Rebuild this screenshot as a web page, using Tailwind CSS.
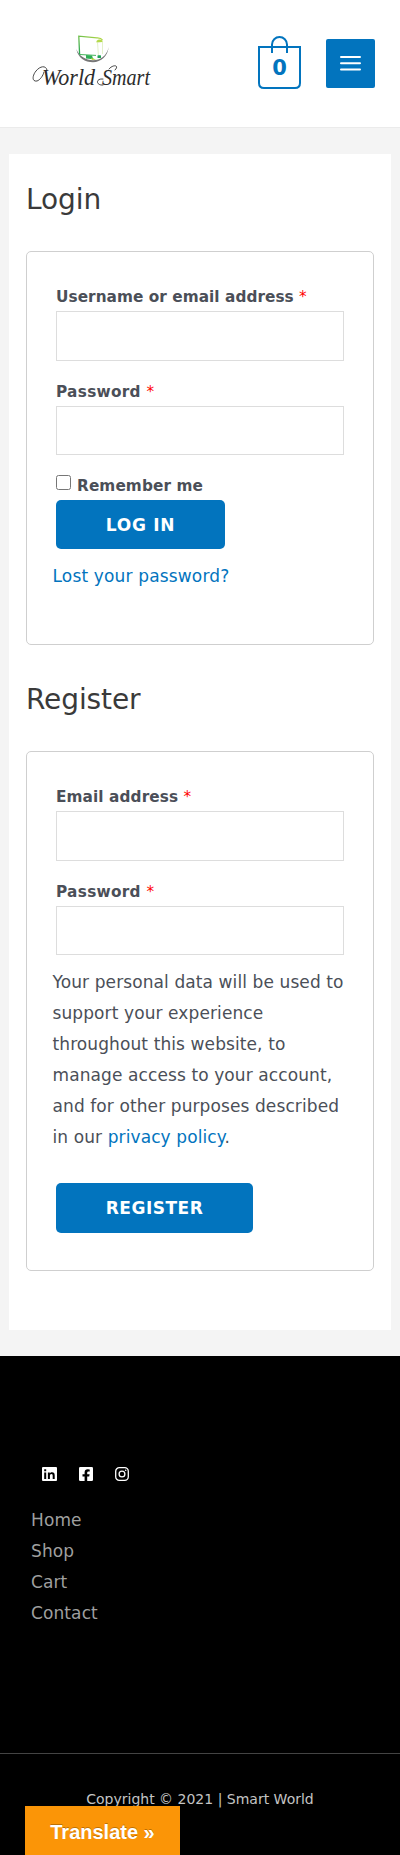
<!DOCTYPE html>
<html lang="en">
<head>
<meta charset="utf-8">
<title>My account</title>
<script src="https://cdn.jsdelivr.net/npm/@tailwindcss/browser@4"></script>
</head>
<body class="bg-[#f4f4f4] font-['Verdana','DejaVu_Sans',sans-serif] text-[#4b4f58]">
<div class="relative h-[1855px] w-[400px] overflow-hidden">
  <header class="flex h-[128px] items-start border-b border-[#ebebeb] bg-white pl-[25px] pr-[25px]">
    <a href="#" class="mt-[28px]" aria-label="World Smart">
      <svg class="overflow-visible" width="135" height="66" viewBox="0 0 135 66">
        <defs>
          <linearGradient id="g" x1="0" y1="1" x2="1" y2="0"><stop offset="0" stop-color="#23a455"/><stop offset="1" stop-color="#bddb45"/></linearGradient>
        </defs>
        <path d="M51.3 21C53 30 60 34.2 68 34.2S83 28 83.600 19C82 28 75 32.300 68 32.300S54 28 51.300 21Z" fill="#777"/>
        <path d="M54.600 26.500L53.800 8.200L72 9.800Q76 9.600 77.500 12" fill="none" stroke="url(#g)" stroke-width="1.300"/>
        <path d="M54.600 26.500L71 27.400" stroke="#45b45b" stroke-width="1" fill="none"/>
        <path d="M61 27L67 27.500L68 30.500L71 31.500L61 30.500Z" fill="#2fae55"/>
        <path d="M66 30L71 31.600L67 32Z" fill="#c5dc33"/>
        <path d="M71.500 13Q74 10.500 77.500 12.500V14L71.500 14.500Z" fill="#b4d94a"/>
        <path d="M72.500 14L73.400 27M77.500 14V26" stroke="#d7ebb5" stroke-width=".7" fill="none"/>
        <rect x="72.500" y="27.300" width="3.500" height="2.800" rx=".6" fill="#20a456"/>
        <text x="17" y="57" font-family="Liberation Serif" font-style="italic" font-size="23" fill="#2c2c2c" textLength="53" lengthAdjust="spacingAndGlyphs">World</text>
        <text x="77" y="57" font-family="Liberation Serif" font-style="italic" font-size="23" fill="#2c2c2c" textLength="48" lengthAdjust="spacingAndGlyphs">Smart</text>
        <path d="M22 42C21 37 15 38 11 43C7 48 7 54 12 53C15 52 18 48 19 44M90 42C95 37 88 36 84 41M78 51C70 50 71 58 78 57" fill="none" stroke="#333" stroke-width=".9" stroke-linecap="round"/>
      </svg>
    </a>
    <a href="#" class="ml-auto mt-[35px]" aria-label="Cart">
      <svg width="43" height="55" viewBox="0 0 43 55" fill="none" stroke="#0274be" stroke-width="2">
        <path d="M1 12H42V48Q42 53 37 53H6Q1 53 1 48Z"/>
        <path d="M14 18V9.500A7.500 7.500 0 0 1 29 9.500V18"/>
        <text x="21.500" y="39.700" text-anchor="middle" font-family="DejaVu Sans" font-weight="700" font-size="21" fill="#0274be" stroke="none">0</text>
      </svg>
    </a>
    <button class="ml-[25px] mt-[39px] flex h-[49px] w-[49px] items-center justify-center rounded-[2px] bg-[#0274be]" aria-label="Menu">
      <svg width="21" height="17" viewBox="0 0 21 17" stroke="#fff" stroke-width="2" stroke-linecap="round"><path d="M1 2H20M1 8.300H20M1 14.600H20"/></svg>
    </button>
  </header>

  <main class="mx-[9px] mt-[26px] h-[1176px] bg-white px-[17px] pt-[24px]">
    <h2 class="h-[73px] pt-[2px] text-[28px] leading-[40px] tracking-[-0.1px] text-[#3a3a3a]">Login</h2>
    <form class="h-[394px] rounded-[5px] border border-[#cfcfcf] px-[29px] pt-[30px] text-[15.3px] font-bold">
      <label class="block h-[29px] whitespace-nowrap leading-[31px] tracking-[0.05px]">Username or email address <span class="font-normal text-[#f00]">*</span></label>
      <div class="h-[50px] border border-[#ddd] bg-white"></div>
      <label class="mt-[16px] block h-[29px] whitespace-nowrap leading-[31px] tracking-[0.3px]">Password <span class="font-normal text-[#f00]">*</span></label>
      <div class="h-[49px] border border-[#ddd] bg-white"></div>
      <label class="mt-[14px] flex h-[31px] pt-[2px] leading-[31px] tracking-[0.1px]"><span class="mt-[4px] mr-[6px] h-[15px] w-[15px] rounded-[2.5px] border border-[#767676] bg-white"></span>Remember me</label>
      <button class="block h-[49px] w-[169px] rounded-[5px] bg-[#0274be] text-[17px] leading-[50px] tracking-[0.7px] text-white">LOG IN</button>
      <a href="#" class="-ml-[3.5px] mt-[12px] block whitespace-nowrap text-[17px] font-normal leading-[31px] tracking-[0.16px] text-[#0274be]">Lost your password?</a>
    </form>
    <h2 class="mt-[32px] h-[74px] pt-[3px] text-[28px] leading-[40px] tracking-[-0.1px] text-[#3a3a3a]">Register</h2>
    <form class="h-[520px] rounded-[5px] border border-[#cfcfcf] px-[29px] pt-[30px] text-[15.3px] font-bold">
      <label class="block h-[29px] whitespace-nowrap leading-[31px] tracking-[0.1px]">Email address <span class="font-normal text-[#f00]">*</span></label>
      <div class="h-[50px] border border-[#ddd] bg-white"></div>
      <label class="mt-[16px] block h-[29px] whitespace-nowrap leading-[31px] tracking-[0.3px]">Password <span class="font-normal text-[#f00]">*</span></label>
      <div class="h-[49px] border border-[#ddd] bg-white"></div>
      <p class="-mx-[3.5px] mt-[12px] whitespace-nowrap text-[17px] font-normal leading-[31px] tracking-[0.1px]">Your personal data will be used to<br>support your experience<br>throughout this website, to<br>manage access to your account,<br>and for other purposes described<br>in our <a href="#" class="text-[#0274be]">privacy policy</a>.</p>
      <button class="mt-[30px] block h-[50px] w-[197px] rounded-[5px] bg-[#0274be] text-[17px] leading-[50px] tracking-[0.5px] text-white">REGISTER</button>
    </form>
  </main>

  <footer class="mt-[26px] h-[499px] bg-black">
    <div class="h-[397px] px-[31px] pt-[110px]">
      <div class="flex h-[16px] gap-[22px] pl-[11px]">
        <svg width="15" height="16" viewBox="0 0 15 16"><rect y="1" width="15" height="14" rx="1" fill="#fff"/><path d="M2.200 6.500H4.200V13H2.200ZM2.200 3.300H4.200V5.300H2.200ZM5.900 6.500H7.800V7.400C8.200 6.700 9 6.300 10 6.300C12 6.300 12.700 7.500 12.700 9.500V13H10.700V9.900C10.700 8.900 10.500 8.100 9.500 8.100S7.900 8.900 7.900 9.900V13H5.900Z" fill="#000"/></svg>
        <svg width="14" height="16" viewBox="0 0 14 16"><rect y="1" width="14" height="14" rx="1.300" fill="#fff"/><path d="M5.600 15V10.500H3.500V8.200H5.600V6.500C5.600 4.400 6.800 3.300 8.700 3.300L10.700 3.500V5.400H9.600C8.500 5.400 8.200 6 8.200 6.700V8.200H10.600L10.200 10.500H8.200V15Z" fill="#000"/></svg>
        <svg width="14" height="16" viewBox="0 0 14 16" fill="none" stroke="#fff" stroke-width="1.300"><rect x=".7" y="1.700" width="12.600" height="12.600" rx="3.600"/><circle cx="7" cy="8" r="2.900"/><circle cx="10.700" cy="4.300" r=".8" fill="#fff" stroke="none"/></svg>
      </div>
      <nav class="mt-[23px] flex flex-col text-[17px] leading-[31px] tracking-[0.1px] text-[#9f9f9f]">
        <a href="#">Home</a><a href="#">Shop</a><a href="#">Cart</a><a href="#">Contact</a>
      </nav>
    </div>
    <div class="border-t border-[#444] pt-[30px] text-center text-[14px] leading-[31px] text-[#c4c4c4]">Copyright © 2021 | Smart World</div>
  </footer>
  <a href="#" class="absolute bottom-0 left-[25px] flex h-[49px] w-[155px] items-center justify-center bg-[#fb9507] pt-[2px] font-['Liberation_Sans',sans-serif] text-[20px] font-bold text-white [text-shadow:0_-1px_0_rgba(0,0,0,0.25)]">Translate »</a>
</div>
</body>
</html>
